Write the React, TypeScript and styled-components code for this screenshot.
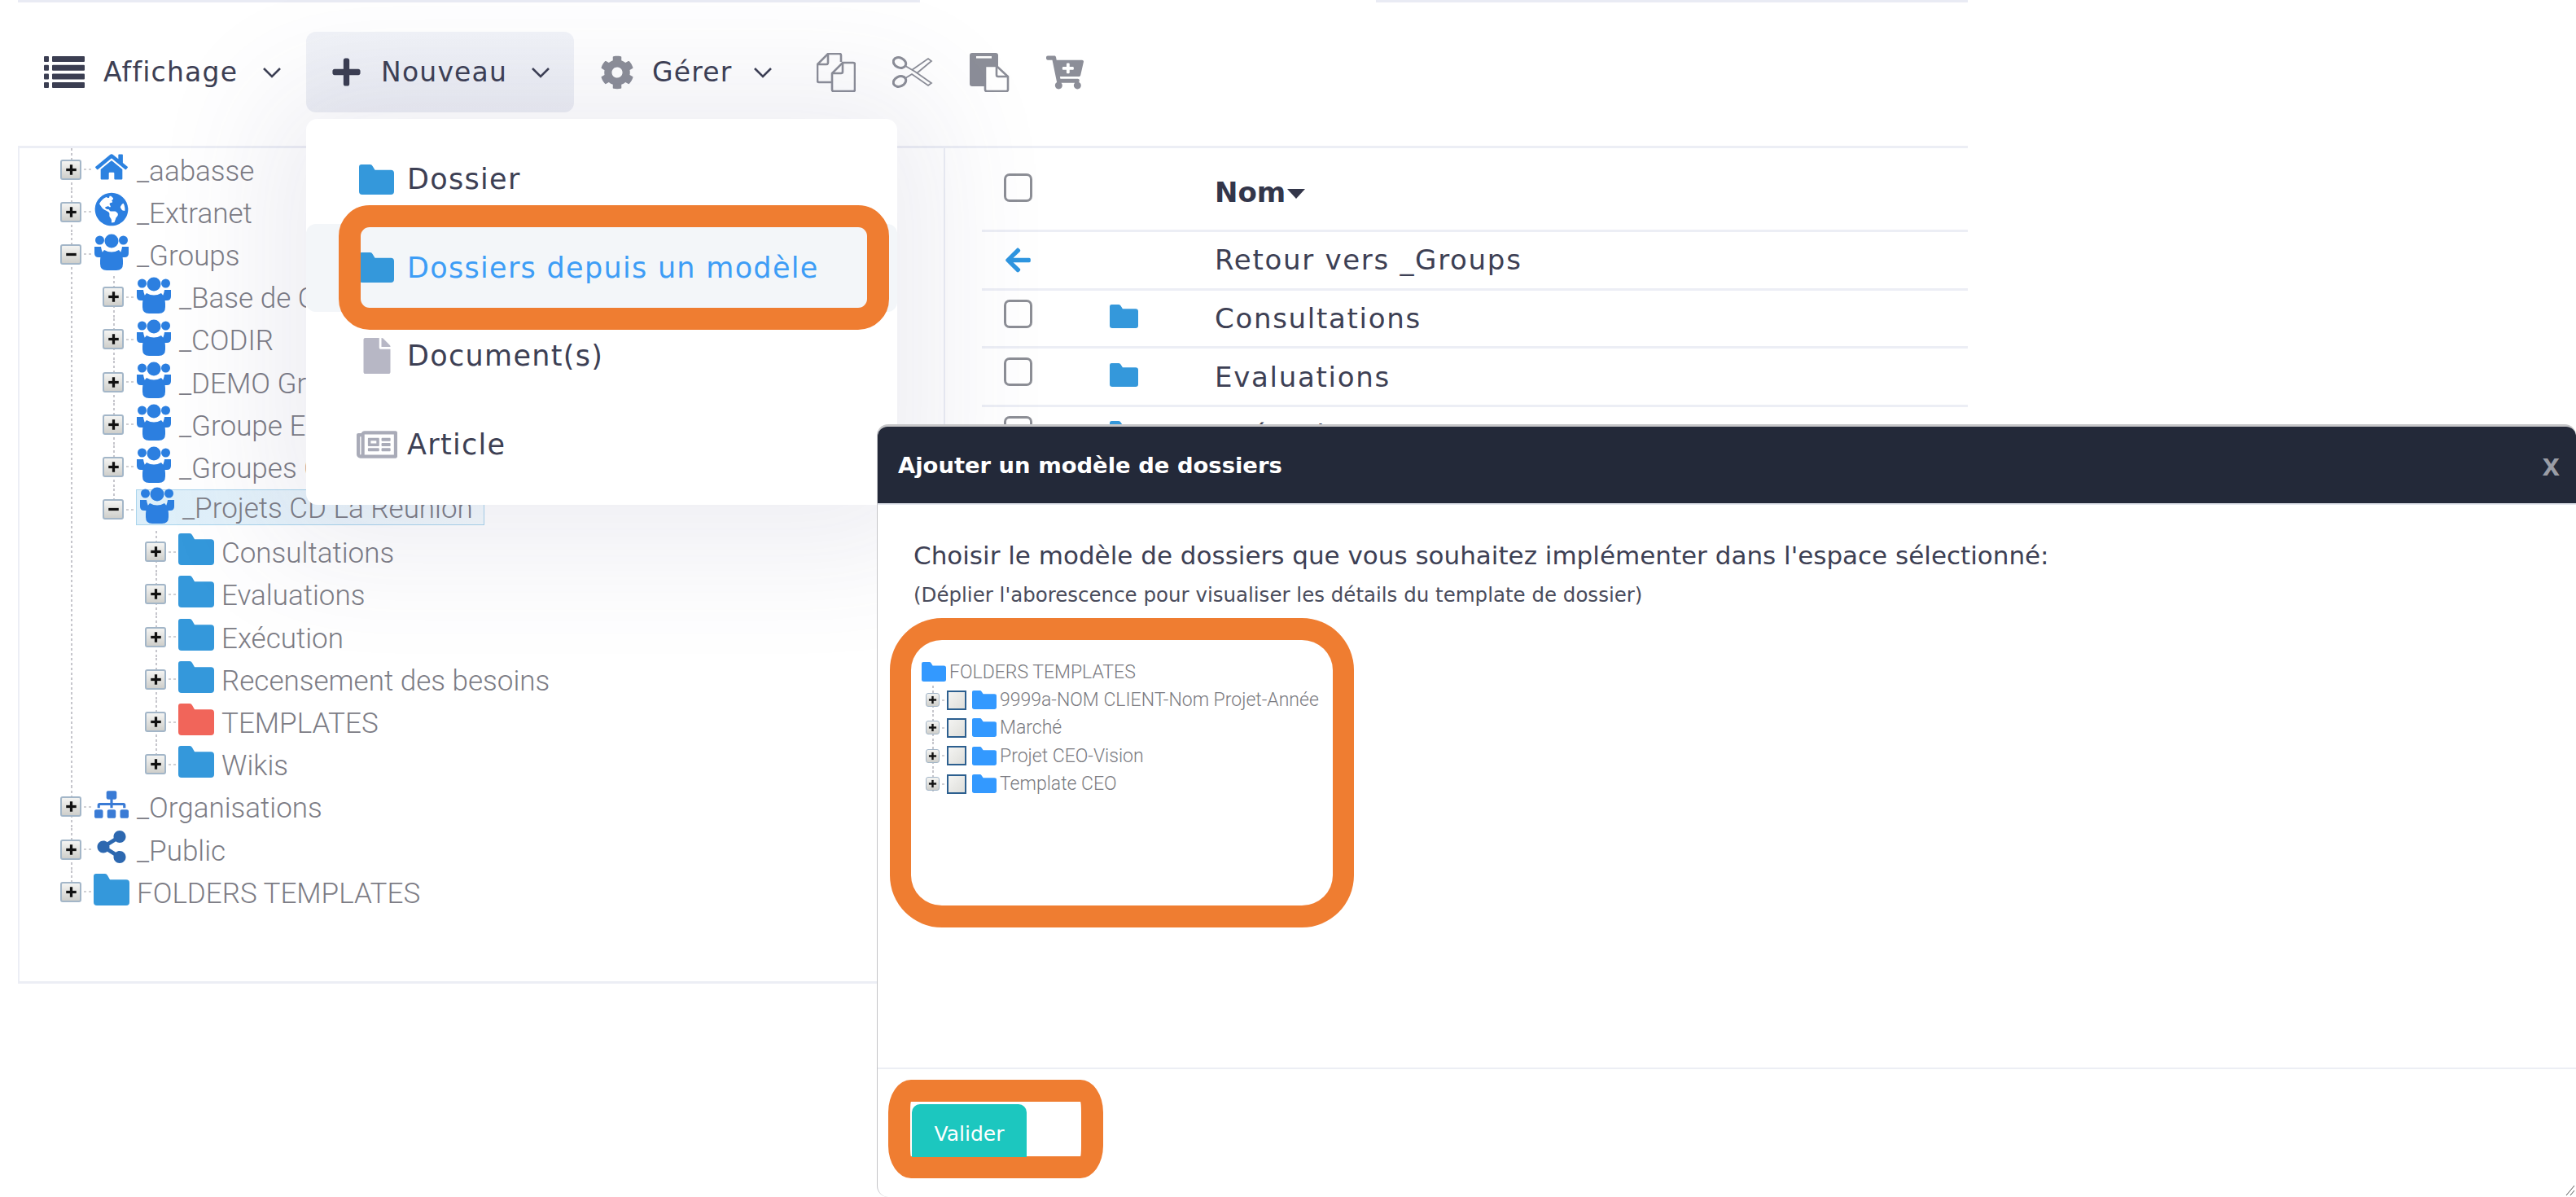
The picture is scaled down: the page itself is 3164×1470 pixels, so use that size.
import React from "react";
import styled, { createGlobalStyle } from "styled-components";
import {
  FaCog,
  FaHome,
  FaGlobeAmericas,
  FaSitemap,
  FaShareAlt,
  FaPlus,
  FaCartPlus,
  FaFile,
  FaRegNewspaper,
  FaArrowLeft,
} from "react-icons/fa";

const ORANGE = "#ef7d31";
const INK = "#3d4054";
const GREY_ICON = "#8c8e98";
const RULE = "#eceef5";
const UI_FONT = `"DejaVu Sans", "Inter", sans-serif`;

const Global = createGlobalStyle`
  html, body { margin: 0; padding: 0; background: #fff; }
  body { font-family: ${UI_FONT}; overflow: hidden; }
  ul { list-style: none; margin: 0; padding: 0; }
`;

const Page = styled.div`
  position: relative;
  width: 3164px;
  height: 1470px;
  overflow: hidden;
  background: #fff;
`;

const TopRules = styled.div`
  display: flex;
  gap: 560px;
  padding-left: 22px;
  height: 3px;
`;
const TopRule = styled.div<{ $w: number }>`
  width: ${(p) => p.$w}px;
  background: #e9ebf4;
`;

const Toolbar = styled.div`
  display: flex;
  align-items: center;
  height: 99px;
  margin: 36px 0 41px;
  padding-left: 54px;
  color: ${INK};
  font-size: 33px;
  letter-spacing: 1.2px;
`;
const ToolButton = styled.div<{ $active?: boolean; $ml: number; $pl: number; $pr: number }>`
  display: flex;
  align-items: center;
  height: 99px;
  margin-left: ${(p) => p.$ml}px;
  padding: 0 ${(p) => p.$pr}px 0 ${(p) => p.$pl}px;
  border-radius: 12px;
  background: ${(p) => (p.$active ? "linear-gradient(#f1f3f8, #eceef4)" : "transparent")};
`;
const ToolLabel = styled.span<{ $ml: number; $w: number }>`
  margin-left: ${(p) => p.$ml}px;
  width: ${(p) => p.$w}px;
  white-space: nowrap;
`;
const ToolIcons = styled.div`
  display: flex;
  align-items: center;
  gap: 45px;
  margin-left: 54px;
`;
const Chevron = () => (
  <svg width="24" height="14" viewBox="0 0 24 14" fill="none">
    <polyline points="2,2 12,12 22,2" stroke={INK} strokeWidth="2.6" />
  </svg>
);
const ListGlyph = () => (
  <svg width="50" height="39" viewBox="0 0 50 39" fill="#3b3e52">
    {[0, 10.7, 21.4, 32].map((y) => (
      <g key={y}>
        <rect x="0" y={y} width="6" height="7" rx="1" />
        <rect x="10" y={y} width="40" height="7" rx="1" />
      </g>
    ))}
  </svg>
);
const CopyGlyph = () => (
  <svg width="48" height="48" viewBox="0 0 48 48" fill="none" stroke={GREY_ICON} strokeWidth="2.6">
    <path d="M30 11V3Q30 1 28 1H14L1 14V34Q1 36 3 36H18" />
    <path d="M14 1V12Q14 14 12 14H1" />
    <path d="M32 12H45Q47 12 47 14V45Q47 47 45 47H21Q19 47 19 45V25Z" />
    <path d="M32 12V23Q32 25 30 25H19" />
  </svg>
);
const ScissorsGlyph = () => (
  <svg width="50" height="39" viewBox="0 0 50 39" fill="none" stroke={GREY_ICON}>
    <ellipse cx="9" cy="8" rx="8" ry="6" strokeWidth="3" transform="rotate(25 9 8)" />
    <ellipse cx="9" cy="31" rx="8" ry="6" strokeWidth="3" transform="rotate(-25 9 31)" />
    <path d="M16 12L28 19L48 33L44 36L24 22L16 27" strokeWidth="1.8" />
    <path d="M24 17L44 3L48 6L30 21" strokeWidth="1.8" />
  </svg>
);
const PasteGlyph = () => (
  <svg width="49" height="48" viewBox="0 0 49 48">
    <rect x="0" y="0" width="35" height="41" rx="3" fill={GREY_ICON} />
    <rect x="8" y="4" width="19" height="2.6" fill="#fff" />
    <path d="M19 16H33L47 29V45Q47 47 45 47H21Q19 47 19 45Z" fill="#fff" stroke={GREY_ICON} strokeWidth="2.6" />
    <path d="M33 16V27Q33 29 35 29H47" fill="none" stroke={GREY_ICON} strokeWidth="2.6" />
  </svg>
);

const Panels = styled.div`
  display: grid;
  grid-template-columns: 1139px 1fr;
  align-items: start;
  margin-left: 22px;
  width: 2395px;
  border-top: 3px solid ${RULE};
`;
const TreePanel = styled.div`
  box-sizing: border-box;
  height: 1026px;
  padding-left: 50px;
  border-left: 2px solid ${RULE};
  border-right: 2px solid ${RULE};
  border-bottom: 3px solid ${RULE};
`;

const DOTS = "repeating-linear-gradient(#c6c6cc 0 3px, transparent 3px 6px)";

const TreeItem = styled.li<{ $last?: boolean; $small?: boolean }>`
  background-image: ${DOTS};
  background-repeat: no-repeat;
  background-position: ${(p) => (p.$small ? "8px" : "13px")} 0;
  background-size: 2px ${(p) => (p.$last ? "26px" : "100%")};
`;
const NestedList = styled.ul<{ $indent: number }>`
  margin-left: ${(p) => p.$indent}px;
`;
const TreeRow = styled.div`
  display: flex;
  align-items: center;
  height: 52.2px;
  color: #7c7c85;
  font-family: "Roboto", sans-serif;
  font-weight: 300;
  font-size: 35px;
  line-height: 1;
  white-space: nowrap;
`;
const Expander = styled.span<{ $small?: boolean }>`
  flex: none;
  display: flex;
  align-items: center;
  justify-content: center;
  box-sizing: border-box;
  width: ${(p) => (p.$small ? 17 : 26)}px;
  height: ${(p) => (p.$small ? 17 : 25)}px;
  border: ${(p) => (p.$small ? 1 : 2)}px solid #a3b6c8;
  border-radius: 3px;
  background: linear-gradient(#f4f4f2, #cfcfcb);
`;
const HDots = styled.span<{ $w: number }>`
  flex: none;
  width: ${(p) => p.$w}px;
  height: 2px;
  background: repeating-linear-gradient(90deg, transparent 0 3px, #d0d0d4 3px 6px);
`;
const TreeIconCell = styled.span`
  flex: none;
  display: flex;
  justify-content: center;
  width: 44px;
  margin: -6px 9px 0 0;
`;
const TreeLabel = styled.span`
  margin-top: 4px;
`;
const SelectedLabel = styled.span`
  flex: none;
  display: flex;
  align-items: center;
  box-sizing: border-box;
  height: 44px;
  width: 428px;
  margin-top: -6px;
  padding-left: 3px;
  border: 1px solid #a9d4ec;
  background: linear-gradient(90deg, #dceef9, #f4fafd);
`;

const Sign = ({ minus, size }: { minus?: boolean; size: number }) => (
  <svg width={size} height={size} viewBox="0 0 12 12" fill="#111">
    <rect x="1" y="4.7" width="10" height="2.6" />
    {!minus && <rect x="4.7" y="1" width="2.6" height="10" />}
  </svg>
);

const FolderGlyph = ({ color, w, h }: { color: string; w: number; h: number }) => (
  <svg width={w} height={h} viewBox="0 0 44 38" preserveAspectRatio="none" fill={color}>
    <path d="M3 0H14Q16 0 17 2L20 7H40Q44 7 44 11V34Q44 38 40 38H4Q0 38 0 34V3Q0 0 3 0Z" />
  </svg>
);

const UsersIcon = () => (
  <svg width="42" height="46" viewBox="0 0 42 46" fill="#2c7fe0">
    <circle cx="6.5" cy="9" r="5.5" />
    <circle cx="35.5" cy="9" r="5.5" />
    <circle cx="21" cy="10" r="8.5" />
    <path d="M0 17H8Q9 24 12 27V30H5Q0 30 0 25Z" />
    <path d="M42 17H34Q33 24 30 27V30H37Q42 30 42 25Z" />
    <path d="M12 21Q21 26 30 21Q35 26 35 34V38Q35 46 27 46H15Q7 46 7 38V34Q7 26 12 21Z" />
  </svg>
);

const BLUE = "#3498db";
const treeData = {
  top: [
    { label: "_aabasse", icon: <FaHome size={40} color="#2c82e0" /> },
    { label: "_Extranet", icon: <FaGlobeAmericas size={42} color="#2c7fe0" /> },
  ],
  groups: ["_Base de Connaissances", "_CODIR", "_DEMO Groupes", "_Groupe Experts", "_Groupes Collaboratifs"],
  projects: [
    { label: "Consultations", color: BLUE },
    { label: "Evaluations", color: BLUE },
    { label: "Exécution", color: BLUE },
    { label: "Recensement des besoins", color: BLUE },
    { label: "TEMPLATES", color: "#f1655a" },
    { label: "Wikis", color: BLUE },
  ],
};

const Tree = () => (
  <ul>
    {treeData.top.map((t) => (
      <TreeItem key={t.label}>
        <TreeRow>
          <Expander><Sign size={15} /></Expander>
          <HDots $w={15} />
          <TreeIconCell>{t.icon}</TreeIconCell>
          <TreeLabel>{t.label}</TreeLabel>
        </TreeRow>
      </TreeItem>
    ))}
    <TreeItem>
      <TreeRow>
        <Expander><Sign minus size={15} /></Expander>
        <HDots $w={15} />
        <TreeIconCell><UsersIcon /></TreeIconCell>
        <TreeLabel>_Groups</TreeLabel>
      </TreeRow>
      <NestedList $indent={52}>
        {treeData.groups.map((g) => (
          <TreeItem key={g}>
            <TreeRow>
              <Expander><Sign size={15} /></Expander>
              <HDots $w={15} />
              <TreeIconCell><UsersIcon /></TreeIconCell>
              <TreeLabel>{g}</TreeLabel>
            </TreeRow>
          </TreeItem>
        ))}
        <TreeItem $last>
          <TreeRow>
            <Expander><Sign minus size={15} /></Expander>
            <HDots $w={15} />
            <SelectedLabel>
              <TreeIconCell><UsersIcon /></TreeIconCell>
              <TreeLabel>_Projets CD La Réunion</TreeLabel>
            </SelectedLabel>
          </TreeRow>
          <NestedList $indent={52}>
            {treeData.projects.map((p, i) => (
              <TreeItem key={p.label} $last={i === treeData.projects.length - 1}>
                <TreeRow>
                  <Expander><Sign size={15} /></Expander>
                  <HDots $w={15} />
                  <TreeIconCell><FolderGlyph color={p.color} w={44} h={39} /></TreeIconCell>
                  <TreeLabel>{p.label}</TreeLabel>
                </TreeRow>
              </TreeItem>
            ))}
          </NestedList>
        </TreeItem>
      </NestedList>
    </TreeItem>
    <TreeItem>
      <TreeRow>
        <Expander><Sign size={15} /></Expander>
        <HDots $w={15} />
        <TreeIconCell><FaSitemap size={42} color="#3a7bd5" /></TreeIconCell>
        <TreeLabel>_Organisations</TreeLabel>
      </TreeRow>
    </TreeItem>
    <TreeItem>
      <TreeRow>
        <Expander><Sign size={15} /></Expander>
        <HDots $w={15} />
        <TreeIconCell><FaShareAlt size={40} color="#2d68b0" /></TreeIconCell>
        <TreeLabel>_Public</TreeLabel>
      </TreeRow>
    </TreeItem>
    <TreeItem $last>
      <TreeRow>
        <Expander><Sign size={15} /></Expander>
        <HDots $w={15} />
        <TreeIconCell><FolderGlyph color={BLUE} w={44} h={39} /></TreeIconCell>
        <TreeLabel>FOLDERS TEMPLATES</TreeLabel>
      </TreeRow>
    </TreeItem>
  </ul>
);

const ListPanel = styled.div`
  padding-left: 45px;
`;
const ListRow = styled.div<{ $h: number; $pt?: number }>`
  display: grid;
  grid-template-columns: 157px 130px 1fr;
  align-items: center;
  box-sizing: border-box;
  height: ${(p) => p.$h}px;
  padding-top: ${(p) => p.$pt ?? 0}px;
  border-bottom: 3px solid ${RULE};
  color: ${INK};
  font-size: 34px;
  letter-spacing: 1.7px;
`;
const CheckCell = styled.div`
  padding-left: 27px;
  display: flex;
`;
const CheckBox = styled.span`
  display: block;
  box-sizing: border-box;
  width: 35px;
  height: 35px;
  margin-bottom: 12px;
  border: 3px solid #8d8f96;
  border-radius: 7px;
`;
const FolderCell = styled.div`
  display: flex;
  margin-bottom: 5px;
`;
const NameCell = styled.div`
  margin-left: -1px;
`;
const HeaderLabel = styled.div`
  display: flex;
  align-items: center;
  margin-left: -1px;
  font-weight: 700;
  letter-spacing: 0;
  color: #33364a;
`;
const SortArrow = styled.span`
  display: block;
  width: 0;
  height: 0;
  margin: 3px 0 0 2px;
  border-left: 11px solid transparent;
  border-right: 11px solid transparent;
  border-top: 12px solid #33364a;
`;

const Menu = styled.div`
  position: absolute;
  left: 376px;
  top: 146px;
  box-sizing: border-box;
  width: 726px;
  height: 474px;
  padding: 20px 0;
  background: #fff;
  border-radius: 14px;
  box-shadow: 0 10px 150px 50px rgba(70, 70, 120, 0.09);
`;
const MenuItem = styled.div<{ $active?: boolean }>`
  position: relative;
  display: flex;
  align-items: center;
  box-sizing: border-box;
  height: 108.5px;
  padding-left: 60px;
  border-radius: 12px;
  background: ${(p) => (p.$active ? "#f3f6f9" : "transparent")};
  color: ${(p) => (p.$active ? "#3d9df6" : INK)};
  font-size: 35px;
  letter-spacing: 1.3px;
`;
const MenuIcon = styled.span`
  flex: none;
  display: flex;
  justify-content: center;
  width: 53px;
  margin-right: 11px;
`;
const MenuFrame = styled.span`
  position: absolute;
  left: 40px;
  right: 10px;
  top: -23px;
  bottom: -22px;
  box-sizing: border-box;
  border: 27px solid ${ORANGE};
  border-radius: 38px;
`;

const Modal = styled.div`
  position: absolute;
  left: 1077px;
  top: 521px;
  right: 0;
  bottom: 0;
  display: flex;
  flex-direction: column;
  box-sizing: border-box;
  border-left: 1px solid #c4c4c8;
  border-top: 3px solid #c6c6c8;
  border-radius: 14px 14px 0 14px;
  background: #fff;
`;
const ModalHeader = styled.div`
  flex: none;
  display: flex;
  align-items: center;
  justify-content: space-between;
  box-sizing: border-box;
  height: 96px;
  padding: 0 20px 0 25px;
  background: #232939;
  border-radius: 12px 12px 0 0;
  border-bottom: 2px solid #e3e6ee;
  color: #fff;
  font-size: 27.4px;
  font-weight: 600;
`;
const CloseMark = styled.span`
  color: #9a9da6;
  font-family: "Liberation Sans", sans-serif;
  font-size: 38px;
  font-weight: 700;
  line-height: 1;
`;
const ModalBody = styled.div`
  flex: 1;
  padding-left: 15px;
`;
const Prompt = styled.div`
  margin: 42px 0 0 29px;
  color: ${INK};
  font-size: 31px;
  line-height: 40px;
  white-space: nowrap;
`;
const SubPrompt = styled.div`
  margin: 14px 0 0 29px;
  color: #4a4c5c;
  font-size: 24.5px;
  line-height: 30px;
  white-space: nowrap;
`;
const TreeFrame = styled.div`
  box-sizing: border-box;
  width: 570px;
  height: 380px;
  margin-top: 13px;
  padding: 22px 0 0 13px;
  border: 27px solid ${ORANGE};
  border-left-width: 26px;
  border-right-width: 26px;
  border-radius: 64px;
`;
const SmallRow = styled.div`
  display: flex;
  align-items: center;
  height: 34.4px;
  color: #7a7a80;
  font-family: "Roboto", sans-serif;
  font-weight: 300;
  font-size: 23px;
  white-space: nowrap;
`;
const SmallList = styled.ul`
  margin-left: 5px;
`;
const SmallCheck = styled.span`
  flex: none;
  box-sizing: border-box;
  width: 24px;
  height: 24px;
  margin-right: 7px;
  border: 2px solid #2c5f8f;
  background: linear-gradient(135deg, #f4f4f2, #dededa);
`;
const SmallFolderCell = styled.span`
  flex: none;
  display: flex;
  margin-right: 4px;
`;
const ModalFooter = styled.div`
  flex: none;
  box-sizing: border-box;
  height: 159px;
  padding: 13px 0 0 13px;
  border-top: 2px solid #eceef4;
`;
const ButtonFrame = styled.div`
  box-sizing: border-box;
  width: 264px;
  height: 121px;
  padding: 3px 0 0 2px;
  border: 27px solid ${ORANGE};
  border-radius: 28px / 40px;
`;
const ValidateButton = styled.div`
  display: flex;
  align-items: center;
  justify-content: center;
  width: 141px;
  height: 65px;
  padding-top: 8px;
  box-sizing: border-box;
  border-radius: 10px 10px 0 0;
  background: #1cc7bf;
  color: #fff;
  font-size: 25px;
`;
const ResizeHandle = styled.svg`
  position: absolute;
  right: 1px;
  bottom: 1px;
`;

const smallItems = ["9999a-NOM CLIENT-Nom Projet-Année", "Marché", "Projet CEO-Vision", "Template CEO"];
const MODAL_BLUE = "#3399ff";

export default function App() {
  return (
    <Page>
      <Global />
      <TopRules>
        <TopRule $w={1108} />
        <TopRule $w={727} />
      </TopRules>
      <Toolbar>
        <ListGlyph />
        <ToolLabel $ml={23} $w={195}>Affichage</ToolLabel>
        <Chevron />
        <ToolButton $active $ml={30} $pl={30} $pr={29}>
          <FaPlus size={39} color="#3b3e52" />
          <ToolLabel $ml={23} $w={184}>Nouveau</ToolLabel>
          <Chevron />
        </ToolButton>
        <ToolButton $ml={0} $pl={32} $pr={0}>
          <FaCog size={42} color={GREY_ICON} />
          <ToolLabel $ml={22} $w={124}>Gérer</ToolLabel>
          <Chevron />
        </ToolButton>
        <ToolIcons>
          <CopyGlyph />
          <ScissorsGlyph />
          <PasteGlyph />
          <FaCartPlus size={46} color={GREY_ICON} />
        </ToolIcons>
      </Toolbar>
      <Panels>
        <TreePanel>
          <Tree />
        </TreePanel>
        <ListPanel>
          <ListRow $h={103} $pt={8}>
            <CheckCell><CheckBox /></CheckCell>
            <div />
            <HeaderLabel>Nom<SortArrow /></HeaderLabel>
          </ListRow>
          <ListRow $h={71.7}>
            <CheckCell><FaArrowLeft size={35} color="#2f96e0" /></CheckCell>
            <div />
            <NameCell>Retour vers _Groups</NameCell>
          </ListRow>
          {["Consultations", "Evaluations", "Exécution"].map((n) => (
            <ListRow $h={71.7} key={n}>
              <CheckCell><CheckBox /></CheckCell>
              <FolderCell><FolderGlyph color={BLUE} w={35} h={29} /></FolderCell>
              <NameCell>{n}</NameCell>
            </ListRow>
          ))}
        </ListPanel>
      </Panels>

      <Menu>
        <MenuItem>
          <MenuIcon><FolderGlyph color={BLUE} w={43} h={37} /></MenuIcon>
          Dossier
        </MenuItem>
        <MenuItem $active>
          <MenuIcon><FolderGlyph color={BLUE} w={43} h={37} /></MenuIcon>
          Dossiers depuis un modèle
          <MenuFrame />
        </MenuItem>
        <MenuItem>
          <MenuIcon><FaFile size={44} color="#b7b7c5" /></MenuIcon>
          Document(s)
        </MenuItem>
        <MenuItem>
          <MenuIcon><FaRegNewspaper size={50} color="#a9abb8" /></MenuIcon>
          Article
        </MenuItem>
      </Menu>

      <Modal>
        <ModalHeader>
          Ajouter un modèle de dossiers
          <CloseMark>x</CloseMark>
        </ModalHeader>
        <ModalBody>
          <Prompt>Choisir le modèle de dossiers que vous souhaitez implémenter dans l'espace sélectionné:</Prompt>
          <SubPrompt>(Déplier l'aborescence pour visualiser les détails du template de dossier)</SubPrompt>
          <TreeFrame>
            <SmallRow>
              <SmallFolderCell><FolderGlyph color={MODAL_BLUE} w={30} h={24} /></SmallFolderCell>
              FOLDERS TEMPLATES
            </SmallRow>
            <SmallList>
              {smallItems.map((s, i) => (
                <TreeItem $small $last={i === smallItems.length - 1} key={s}>
                  <SmallRow>
                    <Expander $small><Sign size={11} /></Expander>
                    <HDots $w={9} />
                    <SmallCheck />
                    <SmallFolderCell><FolderGlyph color={MODAL_BLUE} w={30} h={23} /></SmallFolderCell>
                    {s}
                  </SmallRow>
                </TreeItem>
              ))}
            </SmallList>
          </TreeFrame>
        </ModalBody>
        <ModalFooter>
          <ButtonFrame>
            <ValidateButton>Valider</ValidateButton>
          </ButtonFrame>
        </ModalFooter>
        <ResizeHandle width="12" height="14" viewBox="0 0 12 14" fill="none" stroke="#555" strokeWidth="1">
          <path d="M1 13L11 1M6 13L11 7" />
        </ResizeHandle>
      </Modal>
    </Page>
  );
}
